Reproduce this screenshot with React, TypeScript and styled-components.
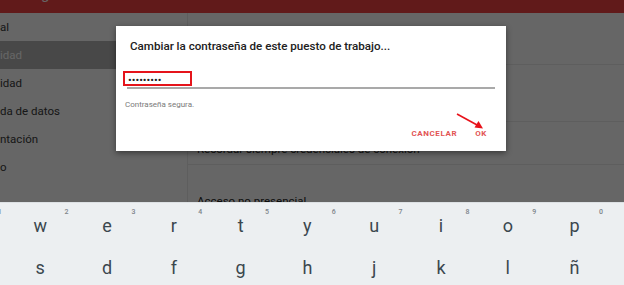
import React from "react";
import styled, { createGlobalStyle } from "styled-components";

const Global = createGlobalStyle`
  html, body { margin: 0; padding: 0; background: #fff; }
  body { font-family: Roboto, "Noto Sans", Arial, sans-serif; }
  * { box-sizing: border-box; }
`;

const Screen = styled.div`
  position: relative;
  width: 624px;
  height: 285px;
  overflow: hidden;
  display: flex;
  flex-direction: column;
`;

const Page = styled.div`
  position: relative;
  height: 202px;
  flex: none;
  display: flex;
  flex-direction: column;
  overflow: hidden;
  background: #ffffff;
`;

const Header = styled.div`
  height: 13px;
  flex: none;
  background: #f34141;
  overflow: hidden;
  padding-left: 6px;
`;

const HeaderTitle = styled.div`
  margin-top: -15px;
  color: #fff;
  font-size: 15px;
  line-height: 18px;
`;

const Body = styled.div`
  flex: 1;
  display: flex;
`;

const Sidebar = styled.div`
  width: 188px;
  flex: none;
  border-right: 1px solid #ececec;
  display: flex;
  flex-direction: column;
`;

const SideItem = styled.div<{ $active?: boolean }>`
  height: 28px;
  display: flex;
  align-items: center;
  padding-left: 0;
  font-size: 11.5px;
  color: ${(p) => (p.$active ? "#ffffff" : "#3a3a3a")};
  background: ${(p) => (p.$active ? "#b3b3b3" : "transparent")};
  white-space: nowrap;
`;

const Content = styled.div`
  flex: 1;
  display: flex;
  flex-direction: column;
`;

const Row = styled.div<{ $h: number; $pt?: number }>`
  height: ${(p) => p.$h}px;
  flex: none;
  border-bottom: 1px solid #ececec;
  padding: ${(p) => p.$pt ?? 0}px 0 0 9px;
  font-size: 11.5px;
  line-height: 14px;
  color: #333;
`;

const SectionTitle = styled.div`
  padding: 29px 0 0 9px;
  font-size: 11.5px;
  line-height: 14px;
  color: #222;
`;

const Scrim = styled.div`
  position: absolute;
  inset: 0;
  background: rgba(0, 0, 0, 0.6);
`;

const Dialog = styled.div`
  position: absolute;
  left: 116px;
  top: 26px;
  width: 390px;
  height: 125px;
  background: #fff;
  box-shadow: 0 2px 6px rgba(0, 0, 0, 0.45);
  display: flex;
  flex-direction: column;
`;

const Title = styled.div`
  margin: 12px 0 0 14px;
  font-size: 11.6px;
  line-height: 16px;
  font-weight: 500;
  color: #212121;
`;

const Field = styled.div`
  position: relative;
  margin: 16px 11px 0 11px;
  height: 19px;
  padding: 4px 0 0 1px;
  border-bottom: 2px solid #a9a9a9;
  font-size: 11px;
  line-height: 13px;
  color: #222;
`;

const Mark = styled.div`
  position: absolute;
  left: -4px;
  top: 1px;
  width: 69px;
  height: 15px;
  border: 2px solid #e5141b;
`;

const Helper = styled.div`
  margin: 10px 0 0 9px;
  font-size: 8px;
  line-height: 12px;
  color: #7a7a7a;
`;

const Actions = styled.div`
  margin-top: 17px;
  padding-right: 19px;
  display: flex;
  justify-content: flex-end;
  gap: 18px;
`;

const TextButton = styled.div`
  font-size: 8px;
  line-height: 12px;
  font-weight: 700;
  letter-spacing: 0.6px;
  color: #e25454;
`;

const Arrow = styled.svg`
  position: absolute;
  left: 450px;
  top: 108px;
  width: 40px;
  height: 28px;
  overflow: visible;
`;

const Keyboard = styled.div`
  flex: 1;
  background: #eceff1;
  border-top: 1px solid #dde1e4;
  padding-top: 1px;
  overflow: hidden;
`;

const KeyRow = styled.div`
  display: grid;
  grid-template-columns: repeat(10, 66.8px);
  margin-left: -60px;
  height: 42px;
`;

const Key = styled.div`
  position: relative;
  display: flex;
  align-items: center;
  justify-content: center;
  font-size: 18px;
  color: #3b474e;
`;

const Hint = styled.span`
  position: absolute;
  top: 4px;
  right: 5px;
  font-size: 7px;
  line-height: 8px;
  font-weight: 500;
  color: #7d8489;
`;

const row1 = ["q", "w", "e", "r", "t", "y", "u", "i", "o", "p"];
const hints = ["1", "2", "3", "4", "5", "6", "7", "8", "9", "0"];
const row2 = ["a", "s", "d", "f", "g", "h", "j", "k", "l", "ñ"];

export default function App() {
  return (
    <>
      <Global />
      <Screen>
        <Page>
          <Header>
            <HeaderTitle>Configuración</HeaderTitle>
          </Header>
          <Body>
            <Sidebar>
              <SideItem>al</SideItem>
              <SideItem $active>idad</SideItem>
              <SideItem>idad</SideItem>
              <SideItem>da de datos</SideItem>
              <SideItem>ntación</SideItem>
              <SideItem>o</SideItem>
            </Sidebar>
            <Content>
              <Row $h={52} />
              <Row $h={57} />
              <Row $h={43} $pt={20}>
                Recordar siempre credenciales de conexión
              </Row>
              <SectionTitle>Acceso no presencial</SectionTitle>
            </Content>
          </Body>
          <Scrim />
        </Page>
        <Keyboard>
          <KeyRow>
            {row1.map((k, i) => (
              <Key key={k}>
                {k}
                <Hint>{hints[i]}</Hint>
              </Key>
            ))}
          </KeyRow>
          <KeyRow>
            {row2.map((k) => (
              <Key key={k}>{k}</Key>
            ))}
          </KeyRow>
        </Keyboard>
        <Dialog>
          <Title>Cambiar la contraseña de este puesto de trabajo...</Title>
          <Field>
            •••••••••
            <Mark />
          </Field>
          <Helper>Contraseña segura.</Helper>
          <Actions>
            <TextButton>CANCELAR</TextButton>
            <TextButton>OK</TextButton>
          </Actions>
        </Dialog>
        <Arrow viewBox="0 0 40 28">
          <line x1="7" y1="6" x2="28" y2="17.5" stroke="#e8121a" strokeWidth="1.6" />
          <polygon points="33,20.5 24.5,19.5 28.5,13" fill="#e8121a" />
        </Arrow>
      </Screen>
    </>
  );
}
